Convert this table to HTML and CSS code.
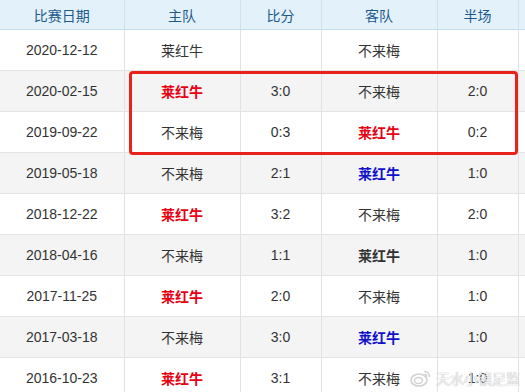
FILE: index.html
```html
<!DOCTYPE html>
<html lang="zh">
<head>
<meta charset="utf-8">
<link rel="stylesheet" href="styles.css">
</head>
<body>
<div class="wrap">
<table class="tbl">
<colgroup>
<col class="c1"><col class="c2"><col class="c3"><col class="c4"><col class="c5"><col class="c6">
</colgroup>
<thead>
<tr><th>比赛日期</th><th>主队</th><th>比分</th><th>客队</th><th>半场</th><th></th></tr>
</thead>
<tbody>
<tr><td>2020-12-12</td><td>莱红牛</td><td></td><td>不来梅</td><td></td><td></td></tr>
<tr><td>2020-02-15</td><td class="red">莱红牛</td><td>3:0</td><td>不来梅</td><td>2:0</td><td></td></tr>
<tr><td>2019-09-22</td><td>不来梅</td><td>0:3</td><td class="red">莱红牛</td><td>0:2</td><td></td></tr>
<tr><td>2019-05-18</td><td>不来梅</td><td>2:1</td><td class="blue">莱红牛</td><td>1:0</td><td></td></tr>
<tr><td>2018-12-22</td><td class="red">莱红牛</td><td>3:2</td><td>不来梅</td><td>2:0</td><td></td></tr>
<tr><td>2018-04-16</td><td>不来梅</td><td>1:1</td><td class="dark">莱红牛</td><td>1:0</td><td></td></tr>
<tr><td>2017-11-25</td><td class="red">莱红牛</td><td>2:0</td><td>不来梅</td><td>1:0</td><td></td></tr>
<tr><td>2017-03-18</td><td>不来梅</td><td>3:0</td><td class="blue">莱红牛</td><td>1:0</td><td></td></tr>
<tr><td>2016-10-23</td><td class="red">莱红牛</td><td>3:1</td><td>不来梅</td><td>1:0</td><td></td></tr>
</tbody>
</table>
<div class="highlight"></div>
<div class="watermark">
<svg class="wb" width="22" height="18" viewBox="0 0 22 18"><ellipse cx="9" cy="11" rx="8" ry="6" fill="none" stroke="#c8c8c8" stroke-width="1.6"/><ellipse cx="8.5" cy="11.5" rx="4" ry="3" fill="none" stroke="#c8c8c8" stroke-width="1.4"/><path d="M14 2.5a5 5 0 0 1 5.5 5.5" fill="none" stroke="#c8c8c8" stroke-width="1.5"/><path d="M14.5 5.2a2.4 2.4 0 0 1 2.4 2.4" fill="none" stroke="#c8c8c8" stroke-width="1.3"/></svg>
<span>天水小镇足监</span>
</div>
</div>
</body>
</html>
```
FILE: styles.css
```css
html, body {
  margin: 0;
  padding: 0;
  background: #fff;
  overflow: hidden;
}
.wrap {
  position: relative;
  width: 525px;
  height: 392px;
  overflow: hidden;
}
.tbl {
  border-collapse: collapse;
  table-layout: fixed;
  width: 578px;
  font-family: "Liberation Sans", "Noto Sans CJK SC", sans-serif;
  font-size: 14px;
  color: #333;
}
.c1 { width: 124px; }
.c2 { width: 116px; }
.c3 { width: 81px; }
.c4 { width: 116px; }
.c5 { width: 81px; }
.c6 { width: 60px; }
.tbl th {
  height: 29px;
  padding: 0;
  background: #e3f1fb;
  color: #1d5a8c;
  font-weight: normal;
  font-size: 14px;
  text-align: center;
  border-left: 1px solid #cfe2f0;
  border-bottom: 1px solid #c8dceb;
}
.tbl td {
  height: 40px;
  padding: 0;
  text-align: center;
  border-left: 1px solid #e2e2e2;
  border-bottom: 1px solid #e4e4e4;
}
.tbl th:first-child, .tbl td:first-child { border-left: none; }
.tbl tbody tr:nth-child(even) td { background: #f4f4f4; }
.red { color: #e60012; font-weight: bold; }
.blue { color: #1111cc; font-weight: bold; }
.dark { color: #333; font-weight: bold; }
.highlight {
  position: absolute;
  left: 129px;
  top: 71px;
  width: 383px;
  height: 78px;
  border: 3px solid #e8231b;
  border-radius: 4px;
}
.watermark {
  position: absolute;
  left: 410px;
  top: 368px;
  display: flex;
  align-items: center;
  gap: 4px;
  font-family: "Noto Sans CJK SC", sans-serif;
  font-size: 14px;
  color: rgba(255, 255, 255, 0.85);
  text-shadow: 0 0 1px #aaa, 0 0 1px #aaa;
  opacity: 0.8;
  white-space: nowrap;
}
```
